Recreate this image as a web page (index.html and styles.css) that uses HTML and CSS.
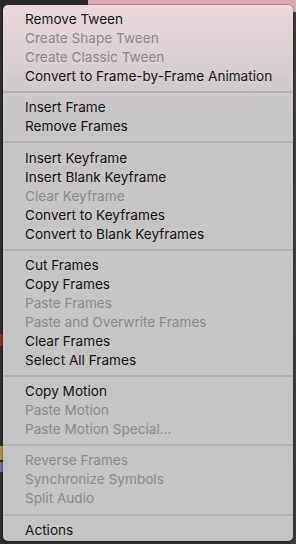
FILE: index.html
```html
<!DOCTYPE html>
<html lang="en">
<head>
  <meta charset="UTF-8" />
  <title>Timeline Context Menu</title>
  <link rel="stylesheet" href="styles.css">
</head>
<body>
  <div class="stage">
    <div class="stage-pink"></div>
    <div class="layer layer-red"></div>
    <div class="layer layer-gold"></div>
    <div class="layer layer-blue"></div>

    <!-- Context menu -->
    <ul class="menu">
      <li class="item">Remove Tween</li>
      <li class="item off">Create Shape Tween</li>
      <li class="item off">Create Classic Tween</li>
      <li class="item">Convert to Frame-by-Frame Animation</li>
      <li class="sep"></li>
      <li class="item">Insert Frame</li>
      <li class="item">Remove Frames</li>
      <li class="sep"></li>
      <li class="item">Insert Keyframe</li>
      <li class="item">Insert Blank Keyframe</li>
      <li class="item off">Clear Keyframe</li>
      <li class="item">Convert to Keyframes</li>
      <li class="item">Convert to Blank Keyframes</li>
      <li class="sep"></li>
      <li class="item">Cut Frames</li>
      <li class="item">Copy Frames</li>
      <li class="item off">Paste Frames</li>
      <li class="item off">Paste and Overwrite Frames</li>
      <li class="item">Clear Frames</li>
      <li class="item">Select All Frames</li>
      <li class="sep"></li>
      <li class="item">Copy Motion</li>
      <li class="item off">Paste Motion</li>
      <li class="item off">Paste Motion Special...</li>
      <li class="sep"></li>
      <li class="item off">Reverse Frames</li>
      <li class="item off">Synchronize Symbols</li>
      <li class="item off">Split Audio</li>
      <li class="sep"></li>
      <li class="item">Actions</li>
    </ul>
  </div>
</body>
</html>
```

FILE: styles.css
```css
* { margin: 0; padding: 0; box-sizing: border-box; }

body {
  width: 296px;
  height: 544px;
  overflow: hidden;
  background: #2f2f2f;
  font-family: "Inter", "Liberation Sans", sans-serif;
}

/* App behind the menu */
.stage {
  position: relative;
  width: 296px;
  height: 544px;
  padding: 5px 3px 0 3px;
  background: linear-gradient(to right, #2b2b2b 0, #2b2b2b 290px, #3a3a3a 290px);
}
.stage-pink {
  position: absolute;
  top: 0; left: 88px; right: 0;
  height: 12px;
  background: #d9a8b0;
}
.layer { position: absolute; left: 0; width: 4px; }
.layer-red  { top: 334px; height: 12px; background: #8a2a26; }
.layer-gold { top: 446px; height: 14px; background: #b08a40; }
.layer-blue { top: 462px; height: 10px; background: #6a6e9c; }

/* Menu */
.menu {
  position: relative;
  list-style: none;
  width: 290px;
  height: 536px;
  padding: 5px 0 4px;
  border-radius: 5px;
  background: linear-gradient(to bottom, #ead8dc 0, #d8cfd1 60px, #c6c4c5 110px, #c3c3c3 100%);
  box-shadow: 0 0 0 0.5px rgba(0,0,0,0.35);
}

.item {
  height: 19px;
  line-height: 19px;
  padding-left: 22px;
  font-size: 13.6px;
  color: #161616;
  white-space: nowrap;
}
.item.off { color: #8c8c8c; }

.sep {
  height: 12.3px;
  display: flex;
  align-items: center;
}
.sep::after {
  content: "";
  flex: 1;
  height: 2px;
  background: #b2b2b2;
}
```
